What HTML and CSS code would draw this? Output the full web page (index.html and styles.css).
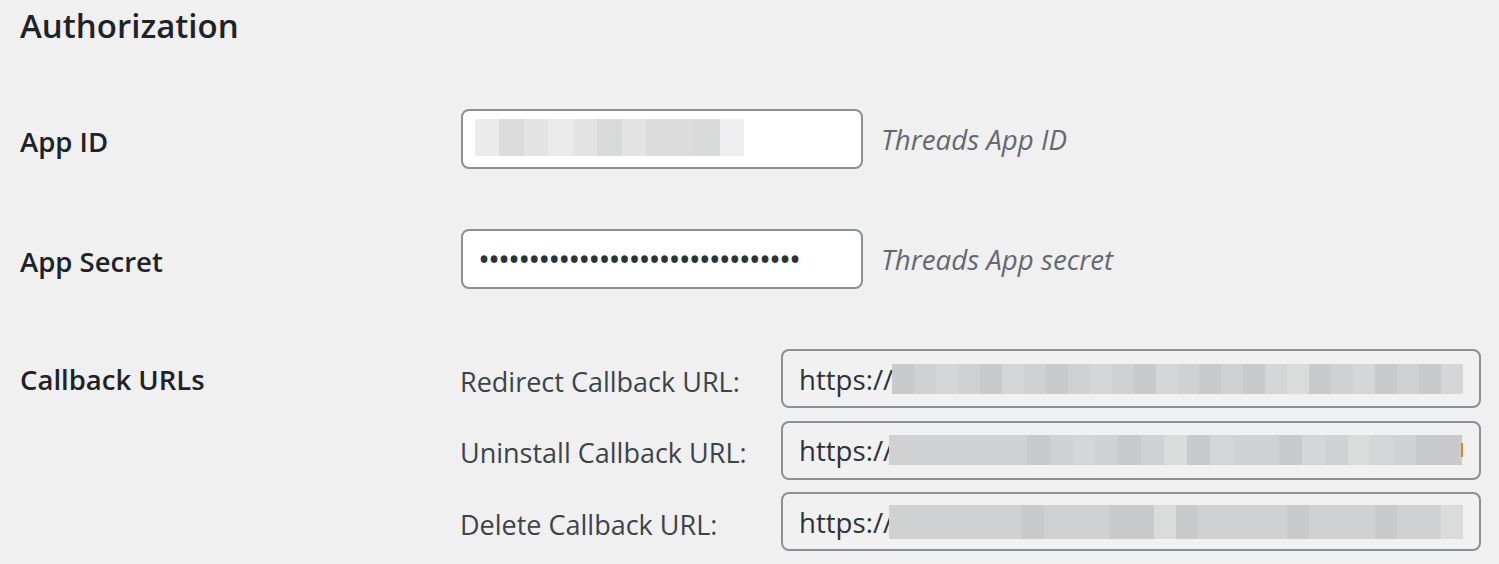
FILE: index.html
```html
<!DOCTYPE html>
<html lang="en">
<head>
<meta charset="utf-8">
<title>Authorization</title>
<link rel="stylesheet" href="styles.css">
</head>
<body>
<div class="wrap">
  <h2 class="title">Authorization</h2>
  <div class="form-table">
    <div class="row">
      <div class="th th-mid">App ID</div>
      <div class="td">
        <div class="field">
          <span class="blur blur-id">
            <span class="b1"></span><span class="b2"></span><span class="b3"></span><span class="b1"></span><span class="b3"></span><span class="b4"></span><span class="b3"></span><span class="b2"></span><span class="b2"></span><span class="b4"></span><span class="b5"></span>
          </span>
        </div>
        <span class="desc">Threads App ID</span>
      </div>
    </div>
    <div class="row">
      <div class="th th-mid">App Secret</div>
      <div class="td">
        <div class="field"><span class="dots">••••••••••••••••••••••••••••••••</span></div>
        <span class="desc">Threads App secret</span>
      </div>
    </div>
    <div class="row row-top">
      <div class="th">Callback URLs</div>
      <div class="td td-stack">
        <div class="sub">
          <span class="sub-label">Redirect Callback URL:</span>
          <div class="field field-ro"><span class="url">https://</span><span class="blur blur-url">
            <span class="g2"></span><span class="g1"></span><span class="g3"></span><span class="g1"></span><span class="g2"></span><span class="g3"></span><span class="g1"></span><span class="g2"></span><span class="g1"></span><span class="g3"></span><span class="g1"></span><span class="g2"></span><span class="g3"></span><span class="g1"></span><span class="g2"></span><span class="g1"></span><span class="g2"></span><span class="g3"></span><span class="g4"></span><span class="g2"></span><span class="g1"></span><span class="g3"></span><span class="g2"></span><span class="g1"></span><span class="g2"></span><span class="g3"></span>
          </span></div>
        </div>
        <div class="sub">
          <span class="sub-label">Uninstall Callback URL:</span>
          <div class="field field-ro"><span class="url">https://</span><span class="blur blur-url blur-over">
            <span class="g1"></span><span class="g1"></span><span class="g1"></span><span class="g1"></span><span class="g1"></span><span class="g1"></span><span class="g2"></span><span class="g1"></span><span class="g3"></span><span class="g1"></span><span class="g2"></span><span class="g1"></span><span class="g4"></span><span class="g2"></span><span class="g3"></span><span class="g1"></span><span class="g1"></span><span class="g2"></span><span class="g3"></span><span class="g1"></span><span class="g4"></span><span class="g3"></span><span class="g1"></span><span class="g2"></span><span class="g2"></span>
          </span><span class="caret"></span></div>
        </div>
        <div class="sub">
          <span class="sub-label">Delete Callback URL:</span>
          <div class="field field-ro"><span class="url">https://</span><span class="blur blur-url blur-over blur-tall">
            <span class="g1"></span><span class="g1"></span><span class="g1"></span><span class="g1"></span><span class="g1"></span><span class="g1"></span><span class="g2"></span><span class="g1"></span><span class="g1"></span><span class="g1"></span><span class="g2"></span><span class="g2"></span><span class="g4"></span><span class="g2"></span><span class="g1"></span><span class="g1"></span><span class="g1"></span><span class="g1"></span><span class="g2"></span><span class="g1"></span><span class="g1"></span><span class="g1"></span><span class="g2"></span><span class="g1"></span><span class="g1"></span><span class="g4"></span>
          </span></div>
        </div>
      </div>
    </div>
  </div>
</div>
</body>
</html>
```

FILE: styles.css
```css
html, body {
  margin: 0;
  padding: 0;
  background: #f0f0f1;
}
body {
  font-family: "Open Sans", "Noto Sans", "DejaVu Sans", sans-serif;
  color: #3c434a;
}
.wrap {
  padding: 0 20px;
}
.title {
  margin: 0;
  padding-top: 4px;
  height: 75px;
  font-size: 33px;
  line-height: 44px;
  font-weight: 600;
  color: #1d2327;
}
.row {
  display: grid;
  grid-template-columns: 441px 1fr;
  align-items: center;
  padding: 30px 0;
}
.row:first-child {
  padding-top: 30px;
}
.row-top {
  align-items: start;
  padding-top: 30px;
}
.th {
  height: 60px;
  display: flex;
  align-items: center;
  font-size: 27.5px;
  font-weight: 600;
  color: #1d2327;
}
.th-mid {
  padding-top: 4px;
  box-sizing: border-box;
}
.td {
  display: flex;
  align-items: center;
  gap: 18px;
}
.td-stack {
  flex-direction: column;
  align-items: stretch;
  gap: 12.5px;
}
.field {
  box-sizing: border-box;
  width: 402px;
  height: 60px;
  background: #fff;
  border: 2px solid #8c8f94;
  border-radius: 8px;
  padding: 0 12px;
  display: flex;
  align-items: center;
  font-size: 27.6px;
  color: #2c3338;
}
.field-ro {
  width: 700px;
  height: 59px;
  background: #f1f1f1;
  padding: 0 16px;
}
.desc {
  font-size: 27.7px;
  font-style: italic;
  color: #646970;
}
.dots {
  padding-left: 3px;
  font-size: 32px;
  line-height: 1;
  letter-spacing: -2px;
  color: #2c3338;
}
.blur {
  display: flex;
  height: 37px;
}
.blur span {
  flex: 1;
}
.blur-id {
  width: 269px;
  margin-bottom: 4px;
}
.blur-url {
  flex: 1;
  height: 30px;
  margin-left: -1px;
}
.blur-over {
  margin-left: -4px;
  position: relative;
}
.blur-tall {
  height: 34px;
}
.caret {
  width: 2px;
  height: 14px;
  margin-left: -1px;
  background: #d98a2a;
  position: relative;
}
.b1 { background: #ebebeb; }
.b2 { background: #dcdcdd; }
.b3 { background: #e4e4e4; }
.b4 { background: #d9dada; }
.b5 { background: #eeeef0; }
.g1 { background: #d0d1d2; }
.g2 { background: #c9cacb; }
.g3 { background: #d5d6d7; }
.g4 { background: #dadbdb; }
.sub {
  display: grid;
  grid-template-columns: 320px 700px;
  align-items: center;
}
.sub-label {
  font-size: 27px;
  color: #3c434a;
  padding-top: 5px;
  margin-left: -1px;
}
.url {
  white-space: nowrap;
}
```
